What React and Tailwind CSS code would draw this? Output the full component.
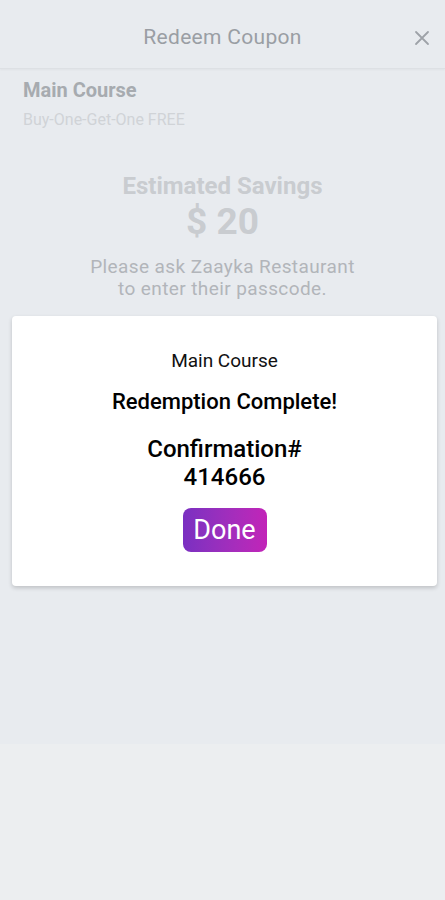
import React from "react";

const CloseIcon = () => (
  <svg width="16" height="16" viewBox="0 0 16 16" fill="none" stroke="#9ea2a8" strokeWidth="1.8" strokeLinecap="round">
    <path d="M2 2 L14 14 M14 2 L2 14" />
  </svg>
);

const App = () => {
  return (
    <div className="min-h-[900px] w-full flex flex-col bg-[#eceef0] font-['Roboto',sans-serif]">
      <div className="bg-[#e8ebef] flex flex-col h-[744px]">
        {/* header */}
        <div className="h-[69px] flex items-center justify-center relative border-b border-[#dde0e4] shadow-[0_1px_2px_rgba(0,0,0,0.04)]">
          <h1 className="text-[21px] text-[#9a9ea4] tracking-[0.3px] mt-[8px]">Redeem Coupon</h1>
          <button className="absolute right-[15px] top-[30px]">
            <CloseIcon />
          </button>
        </div>

        <div className="px-[23px] pt-[8px]">
          <p className="text-[20px] font-bold text-[#a7abb0] leading-[26px]">Main Course</p>
          <p className="text-[16px] text-[#d0d3d7] mt-[7px] leading-[20px]">Buy-One-Get-One FREE</p>
        </div>

        <div className="flex flex-col items-center mt-[42px]">
          <p className="text-[24px] font-bold text-[#c9ccd0] leading-[28px]">Estimated Savings</p>
          <p className="text-[37px] font-bold text-[#c9ccd0] leading-[42px] mt-[1px]">$ 20</p>
          <p className="text-[19px] text-[#b2b5ba] leading-[22px] mt-[13px] text-center tracking-[0.4px]">
            Please ask Zaayka Restaurant
            <br />
            to enter their passcode.
          </p>
        </div>

        {/* dialog card */}
        <div className="ml-[12px] mr-[8px] mt-[16px] h-[270px] bg-white rounded-[4px] shadow-[0_2px_4px_rgba(0,0,0,0.18)] flex flex-col items-center pt-[33px]">
          <p className="text-[19px] text-[#111] leading-[24px]">Main Course</p>
          <p className="text-[22px] font-medium text-black leading-[26px] mt-[16px]">Redemption Complete!</p>
          <p className="text-[24px] font-medium text-black leading-[28px] mt-[20px]">Confirmation#</p>
          <p className="text-[24px] font-medium text-black leading-[28px]">414666</p>
          <button className="mt-[17px] w-[84px] h-[44px] rounded-[8px] bg-gradient-to-r from-[#7a2fc1] to-[#c223b8] text-white text-[27px] leading-none">
            Done
          </button>
        </div>
      </div>
    </div>
  );
};

export default App;
